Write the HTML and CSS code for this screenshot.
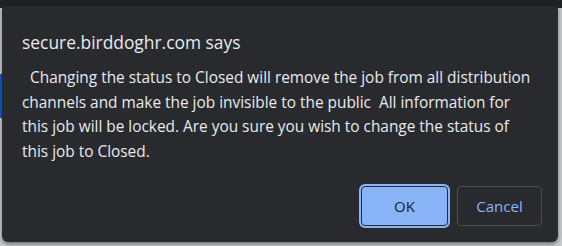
FILE: index.html
```html
<!DOCTYPE html>
<html lang="en">
<head>
    <meta charset="UTF-8">
    <meta name="viewport" content="width=device-width, initial-scale=1.0">
    <title>secure.birddoghr.com says</title>
    <link rel="stylesheet" href="styles.css">
</head>
<body>
    <div class="page">
        <div class="top-bar"></div>
        <div class="page-body">
            <div class="side-tab"></div>
        </div>
    </div>

    <div class="dialog" role="alertdialog">
        <h1 class="dialog-title">secure.birddoghr.com says</h1>
        <p class="dialog-message">  Changing the status to Closed will remove the job from all distribution channels and make the job invisible to the public  All information for this job will be locked. Are you sure you wish to change the status of this job to Closed.</p>
        <div class="dialog-buttons">
            <button type="button" class="btn btn-ok">OK</button>
            <button type="button" class="btn btn-cancel">Cancel</button>
        </div>
    </div>
</body>
</html>
```

FILE: styles.css
```css
body {
    margin: 0;
    height: 246px;
    overflow: hidden;
    font-family: "Open Sans", "Noto Sans", Arial, sans-serif;
    background-color: #c9cacc;
}
.page {
    height: 246px;
    display: flex;
    flex-direction: column;
}
.top-bar {
    height: 8px;
    background-color: #1f2023;
}
.page-body {
    flex: 1;
    padding-top: 66px;
}
.side-tab {
    width: 3px;
    height: 44px;
    background-color: #0a5bd6;
}
.dialog {
    position: absolute;
    left: 2px;
    top: 6px;
    width: 556px;
    height: 236px;
    box-sizing: border-box;
    padding: 24px 16px 16px 20px;
    background-color: #292a2d;
    color: #e8eaed;
    border-radius: 0 0 6px 6px;
    box-shadow: 0 2px 4px rgba(0, 0, 0, 0.45);
    display: flex;
    flex-direction: column;
}
.dialog-title {
    margin: 0;
    font-size: 17.4px;
    font-weight: normal;
    line-height: 24px;
}
.dialog-message {
    margin: 12px 6px 0 0;
    font-size: 15.4px;
    line-height: 24.7px;
    white-space: pre-wrap;
}
.dialog-buttons {
    margin-top: auto;
    display: flex;
    justify-content: flex-end;
    gap: 9px;
}
.btn {
    font-family: inherit;
    font-size: 15px;
    height: 40px;
    border-radius: 4px;
    cursor: pointer;
}
.btn-ok {
    width: 87px;
    background-color: #8ab4f8;
    color: #202124;
    border: 1px solid #292a2d;
    box-shadow: 0 0 0 2px #8ab4f8;
}
.btn-cancel {
    width: 85px;
    background-color: transparent;
    color: #8ab4f8;
    border: 1px solid #4a4c50;
}
```
